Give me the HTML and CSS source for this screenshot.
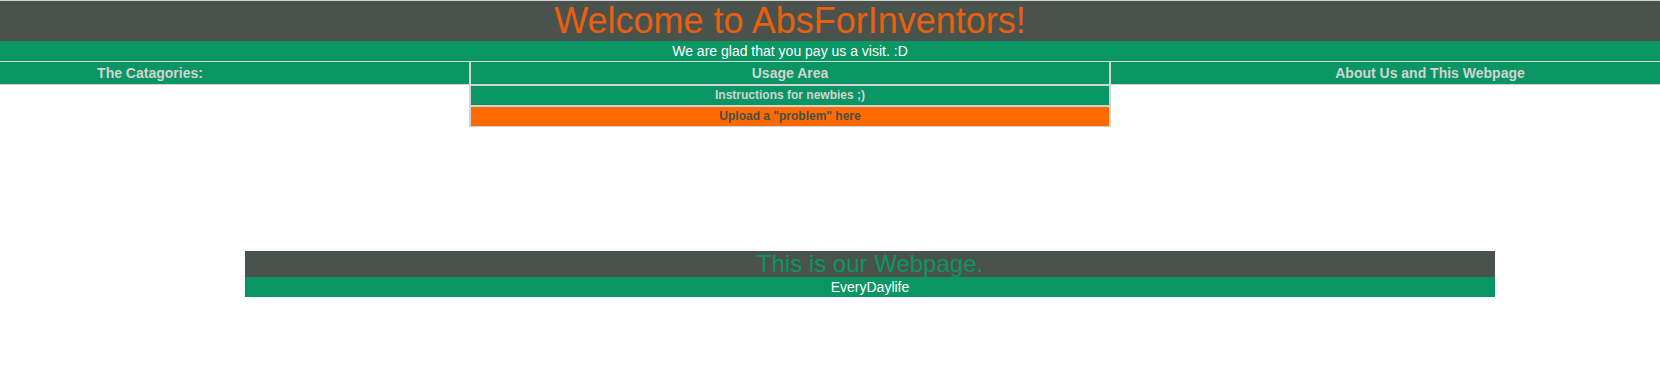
FILE: index.html
```html
<!DOCTYPE html>
<html lang="en">
<head>
  <meta charset="UTF-8" />
  <title>AbsForInventors</title>
  <link rel="stylesheet" href="styles.css">
</head>
<body>

  <div class="banner">
    <h1>Welcome to AbsForInventors!</h1>
  </div>
  <div class="greeting">
    <p>We are glad that you pay us a visit. :D</p>
  </div>

  <div class="nav">
    <div class="side side-left">The Catagories:</div>
    <div class="usage">
      <div class="usage-head">Usage Area</div>
      <a class="usage-link newbies" href="#">Instructions for newbies ;)</a>
      <a class="usage-link upload" href="#">Upload a "problem" here</a>
    </div>
    <div class="side side-right">About Us and This Webpage</div>
  </div>

  <div class="footer-box">
    <h2>This is our Webpage.</h2>
    <p>EveryDaylife</p>
  </div>

</body>
</html>
```

FILE: styles.css
```css
body {
  margin: 0;
  font-family: "Liberation Sans", Arial, sans-serif;
  background-color: #fff;
}
.banner {
  background-color: #4a524e;
  border-top: 1px solid #d3d3d3;
  height: 40px;
}
.banner h1 {
  width: 1580px;
  margin: 0;
  font-size: 36px;
  font-weight: normal;
  line-height: 40px;
  text-align: center;
  color: #e8600c;
}
.greeting {
  background-color: #0a9564;
  height: 20px;
}
.greeting p {
  width: 1580px;
  margin: 0;
  font-size: 14px;
  line-height: 20px;
  text-align: center;
  color: #fff;
}
.nav {
  display: grid;
  grid-template-columns: 469px 642px 1fr;
  align-items: start;
  border-top: 1px solid #d3d3d3;
}
.side {
  height: 22px;
  line-height: 22px;
  font-size: 14px;
  font-weight: bold;
  text-align: center;
  color: #d3d3d3;
  background-color: #0a9564;
  border-bottom: 1px solid #d3d3d3;
}
.side-left {
  padding-right: 169px;
}
.side-right {
  padding-left: 89px;
}
.usage {
  display: flex;
  flex-direction: column;
  gap: 2px;
  padding: 0 2px 1px;
  background-color: #d3d3d3;
}
.usage-head {
  height: 22px;
  line-height: 22px;
  font-size: 14px;
  font-weight: bold;
  text-align: center;
  color: #d3d3d3;
  background-color: #0a9564;
}
.usage-link {
  display: block;
  height: 19px;
  line-height: 19px;
  font-size: 12px;
  font-weight: bold;
  text-align: center;
  text-decoration: none;
}
.newbies {
  color: #d3d3d3;
  background-color: #0a9564;
}
.upload {
  color: #474f4c;
  background-color: #ff6a00;
}
.footer-box {
  width: 1250px;
  margin: 124px 0 0 245px;
}
.footer-box h2 {
  margin: 0;
  height: 26px;
  font-size: 24px;
  font-weight: normal;
  line-height: 26px;
  text-align: center;
  color: #0a9564;
  background-color: #4a524e;
}
.footer-box p {
  margin: 0;
  height: 20px;
  font-size: 14px;
  line-height: 20px;
  text-align: center;
  color: #fff;
  background-color: #0a9564;
}
```
